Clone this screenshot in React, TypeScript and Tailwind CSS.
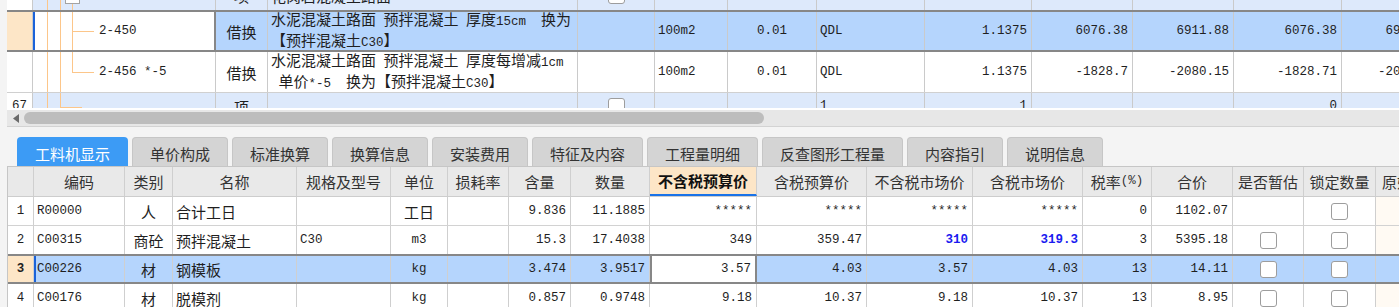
import React from 'react'

type Align = 'l' | 'c' | 'r'
type Seg = [number, number, number, number]

// 上段（定额行）列宽
const topW = ['w-[26px]', 'w-[183px]', 'w-[52px]', 'w-[310px]', 'w-[77px]', 'w-[73px]', 'w-[89px]', 'w-[108px]', 'w-[107px]', 'w-[101px]', 'w-[101px]', 'w-[108px]', 'w-[101px]']

// 下段（工料机）列宽
const botW = ['w-[26px]', 'w-[91px]', 'w-[48px]', 'w-[124px]', 'w-[94px]', 'w-[57px]', 'w-[61px]', 'w-[62px]', 'w-[79px]', 'w-[107px]', 'w-[110px]', 'w-[106px]', 'w-[110px]', 'w-[69px]', 'w-[81px]', 'w-[71px]', 'w-[72px]', 'w-[100px]']

const alignCls = (a: Align) => (a === 'r' ? 'justify-end pr-1' : a === 'c' ? 'justify-center' : 'pl-[3px]')

// ASCII は等幅、漢字は CJK フォントで
function Mix({ text }: { text: string }) {
  const parts = text.match(/[\x00-\x7f]+|[^\x00-\x7f]+/g) || []
  return (
    <>
      {parts.map((p, i) =>
        /^[\x00-\x7f]/.test(p) ? (
          <span key={i} className="font-['Liberation_Mono',monospace] text-[12.5px]">{p}</span>
        ) : (
          <span key={i}>{p}</span>
        )
      )}
    </>
  )
}

function Check() {
  return <span className="block w-[17px] h-[17px] rounded-[3px] border border-[#9d9d9d] bg-white" />
}

function Tree({ w, h, segs, boxY }: { w: number; h: number; segs: Seg[]; boxY?: number }) {
  return (
    <svg width={w} height={h} className="shrink-0" shapeRendering="crispEdges">
      {segs.map(([x1, y1, x2, y2], i) => (
        <line key={i} x1={x1} y1={y1} x2={x2} y2={y2} stroke="#fcc68a" strokeWidth={1} />
      ))}
      {boxY !== undefined && (
        <>
          <rect x={29.5} y={boxY + 0.5} width={14} height={14} fill="#fff" stroke="#a3a3a3" />
          <line x1={33} y1={boxY + 7.5} x2={40} y2={boxY + 7.5} stroke="#555" />
        </>
      )}
    </svg>
  )
}

function TCell({ i, align = 'l', className = '', children }: { i: number; align?: Align; className?: string; children?: React.ReactNode }) {
  return (
    <div className={`${topW[i]} shrink-0 h-full border-r border-[#cacaca] flex items-center overflow-hidden whitespace-pre ${alignCls(align)} ${className}`}>
      {children}
    </div>
  )
}

function BCell({ i, align = 'l', className = '', children }: { i: number; align?: Align; className?: string; children?: React.ReactNode }) {
  return (
    <div className={`${botW[i]} shrink-0 h-full border-r border-[#cfcfcf] flex items-center overflow-hidden whitespace-pre ${alignCls(align)} ${className}`}>
      {children}
    </div>
  )
}

function TopGrid() {
  return (
    <div className="h-[108px] overflow-hidden bg-white">
      {/* 66 行（上が切れている） */}
      <div className="flex w-max h-[31px] -mt-[20px] border-b border-[#d0d0d0] bg-[#dde9fb]">
        <TCell i={0} align="c" className="bg-white"><Mix text="66" /></TCell>
        <TCell i={1} className="pl-0">
          <Tree w={51} h={30} boxY={9} segs={[[11.5, 0, 11.5, 30], [24.5, 0, 24.5, 30], [36.5, 24, 36.5, 30]]} />
          <Mix text="040203006001" />
        </TCell>
        <TCell i={2} align="c">项</TCell>
        <TCell i={3}>花岗岩混凝土路面</TCell>
        <TCell i={4} align="c"><Check /></TCell>
        <TCell i={5}><Mix text="m2" /></TCell>
        <TCell i={6} />
        <TCell i={7}><Mix text="GCLMXHJ" /></TCell>
        <TCell i={8} align="r"><Mix text="5687.46" /></TCell>
        <TCell i={9} />
        <TCell i={10} />
        <TCell i={11} align="r"><Mix text="12.48" /></TCell>
        <TCell i={12} />
      </div>

      {/* 2-450 選択行 */}
      <div className="flex w-max h-[42px] -mt-px border-y-2 border-[#878787] bg-[#b5d5fd]">
        <TCell i={0} className="bg-[#fde6c7]" />
        <TCell i={1} className="pl-0 bg-white border-l-2 border-l-[#1b63d9] border-r-2 border-r-[#878787]">
          <Tree w={61} h={38} segs={[[9.5, 0, 9.5, 38], [22.5, 0, 22.5, 38], [34.5, 0, 34.5, 38], [34.5, 19.5, 56, 19.5]]} />
          <Mix text="2-450" />
        </TCell>
        <TCell i={2} align="c">借换</TCell>
        <TCell i={3} className="flex-col items-start justify-center">
          <div><Mix text="水泥混凝土路面 预拌混凝土 厚度15cm  换为" /></div>
          <div>【预拌混凝土<Mix text="C30" />】</div>
        </TCell>
        <TCell i={4} />
        <TCell i={5}><Mix text="100m2" /></TCell>
        <TCell i={6} align="c"><Mix text="0.01" /></TCell>
        <TCell i={7}><Mix text="QDL" /></TCell>
        <TCell i={8} align="r"><Mix text="1.1375" /></TCell>
        <TCell i={9} align="r"><Mix text="6076.38" /></TCell>
        <TCell i={10} align="r"><Mix text="6911.88" /></TCell>
        <TCell i={11} align="r"><Mix text="6076.38" /></TCell>
        <TCell i={12} align="r"><Mix text="6911.88" /></TCell>
      </div>

      {/* 2-456 */}
      <div className="flex w-max h-[41px] border-b border-[#d0d0d0] bg-white">
        <TCell i={0} />
        <TCell i={1} className="pl-0">
          <Tree w={63} h={40} segs={[[11.5, 0, 11.5, 40], [24.5, 0, 24.5, 40], [36.5, 0, 36.5, 20.5], [36.5, 20.5, 58, 20.5]]} />
          <Mix text="2-456 *-5" />
        </TCell>
        <TCell i={2} align="c">借换</TCell>
        <TCell i={3} className="flex-col items-start justify-center">
          <div><Mix text="水泥混凝土路面 预拌混凝土 厚度每增减1cm" /></div>
          <div><Mix text=" 单价*-5  换为【预拌混凝土C30】" /></div>
        </TCell>
        <TCell i={4} />
        <TCell i={5}><Mix text="100m2" /></TCell>
        <TCell i={6} align="c"><Mix text="0.01" /></TCell>
        <TCell i={7}><Mix text="QDL" /></TCell>
        <TCell i={8} align="r"><Mix text="1.1375" /></TCell>
        <TCell i={9} align="r"><Mix text="-1828.7" /></TCell>
        <TCell i={10} align="r"><Mix text="-2080.15" /></TCell>
        <TCell i={11} align="r"><Mix text="-1828.71" /></TCell>
        <TCell i={12} align="r"><Mix text="-2080.15" /></TCell>
      </div>

      {/* 67 行（下が切れている） */}
      <div className="flex w-max h-[28px] border-b border-[#d0d0d0] bg-[#dde9fb]">
        <TCell i={0} align="c" className="bg-white"><Mix text="67" /></TCell>
        <TCell i={1} className="pl-0">
          <Tree w={51} h={27} segs={[[11.5, 0, 11.5, 27], [24.5, 0, 24.5, 14.5], [24.5, 14.5, 46, 14.5]]} />
        </TCell>
        <TCell i={2} align="c">项</TCell>
        <TCell i={3} />
        <TCell i={4} align="c"><Check /></TCell>
        <TCell i={5} />
        <TCell i={6} />
        <TCell i={7}><Mix text="1" /></TCell>
        <TCell i={8} align="r"><Mix text="1" /></TCell>
        <TCell i={9} />
        <TCell i={10} />
        <TCell i={11} align="r"><Mix text="0" /></TCell>
        <TCell i={12} />
      </div>
    </div>
  )
}

function ScrollBar() {
  return (
    <>
      <div className="h-[2px] bg-white" />
      <div className="h-[17px] bg-[#e7e7e7] flex items-center border-b border-[#d3d3d3]">
        <svg width="6" height="9" className="ml-[6px] shrink-0">
          <path d="M6 0 L0 4.5 L6 9 Z" fill="#6a6a6a" />
        </svg>
        <div className="ml-[5px] w-[740px] h-[12px] rounded-[6px] bg-[#bdbdbd]" />
      </div>
      <div className="h-[10px]" />
    </>
  )
}

const tabs = [
  { label: '工料机显示', w: 'w-[111px]' },
  { label: '单价构成', w: 'w-[96px]' },
  { label: '标准换算', w: 'w-[96px]' },
  { label: '换算信息', w: 'w-[96px]' },
  { label: '安装费用', w: 'w-[96px]' },
  { label: '特征及内容', w: 'w-[111px]' },
  { label: '工程量明细', w: 'w-[111px]' },
  { label: '反查图形工程量', w: 'w-[141px]' },
  { label: '内容指引', w: 'w-[96px]' },
  { label: '说明信息', w: 'w-[96px]' },
]

function Tabs() {
  return (
    <div className="flex gap-1 ml-[10px] h-[29px]">
      {tabs.map((t, i) => (
        <div
          key={t.label}
          className={`${t.w} h-full shrink-0 rounded-t-[4px] flex items-center justify-center pt-[3px] ${
            i === 0 ? 'bg-[#3c9bf5] text-white' : 'bg-[#d4d4d4] text-[#333] border border-b-0 border-[#c6c6c6]'
          }`}
        >
          {t.label}
        </div>
      ))}
    </div>
  )
}

const headers = ['', '编码', '类别', '名称', '规格及型号', '单位', '损耗率', '含量', '数量', '不含税预算价', '含税预算价', '不含税市场价', '含税市场价', '税率(%)', '合价', '是否暂估', '锁定数量', '原始数量']

type Mat = {
  no: string
  code: string
  kind: string
  name: string
  spec: string
  unit: string
  amt: string
  qty: string
  p1: string
  p2: string
  p3: string
  p4: string
  tax: string
  total: string
  est: boolean
  blue?: boolean
}

const mats: Mat[] = [
  { no: '1', code: 'R00000', kind: '人', name: '合计工日', spec: '', unit: '工日', amt: '9.836', qty: '11.1885', p1: '*****', p2: '*****', p3: '*****', p4: '*****', tax: '0', total: '1102.07', est: false },
  { no: '2', code: 'C00315', kind: '商砼', name: '预拌混凝土', spec: 'C30', unit: 'm3', amt: '15.3', qty: '17.4038', p1: '349', p2: '359.47', p3: '310', p4: '319.3', tax: '3', total: '5395.18', est: true, blue: true },
  { no: '3', code: 'C00226', kind: '材', name: '钢模板', spec: '', unit: 'kg', amt: '3.474', qty: '3.9517', p1: '3.57', p2: '4.03', p3: '3.57', p4: '4.03', tax: '13', total: '14.11', est: true },
  { no: '4', code: 'C00176', kind: '材', name: '脱模剂', spec: '', unit: 'kg', amt: '0.857', qty: '0.9748', p1: '9.18', p2: '10.37', p3: '9.18', p4: '10.37', tax: '13', total: '8.95', est: true },
]

function BottomGrid() {
  return (
    <div className="w-max border-t border-l border-[#c6c6c6] bg-white">
      <div className="flex h-[30px] border-b border-[#cdcdcd] bg-[#e9e9e9] text-[#333]">
        {headers.map((h, i) => (
          <BCell
            key={i}
            i={i}
            align={i === 17 ? 'l' : 'c'}
            className={i === 9 ? 'bg-[#fde6c7] font-bold text-[#111] border-b-2 border-b-[#1a73e8]' : i === 17 ? 'pl-[6px]' : ''}
          >
            <Mix text={h} />
          </BCell>
        ))}
      </div>
      {mats.map((m) => {
        const sel = m.no === '3'
        const blue = m.blue ? 'text-[#1b1bf0] font-bold' : ''
        return (
          <div
            key={m.no}
            className={`flex ${sel ? 'h-[30px] -mt-px border-y-2 border-[#878787] bg-[#b5d5fd]' : 'h-[29px] border-b border-[#d2d2d2]'}`}
          >
            <BCell i={0} align="c" className={sel ? 'bg-[#fde6c7] font-bold' : ''}><Mix text={m.no} /></BCell>
            <BCell i={1} className={sel ? 'border-l-2 border-l-[#1b63d9] pl-px' : ''}><Mix text={m.code} /></BCell>
            <BCell i={2} align="c">{m.kind}</BCell>
            <BCell i={3}>{m.name}</BCell>
            <BCell i={4}><Mix text={m.spec} /></BCell>
            <BCell i={5} align="c"><Mix text={m.unit} /></BCell>
            <BCell i={6} align="r" />
            <BCell i={7} align="r"><Mix text={m.amt} /></BCell>
            <BCell i={8} align="r"><Mix text={m.qty} /></BCell>
            <BCell i={9} align="r" className={sel ? 'bg-white border-l-2 border-l-[#878787] border-r-2 border-r-[#878787]' : ''}><Mix text={m.p1} /></BCell>
            <BCell i={10} align="r"><Mix text={m.p2} /></BCell>
            <BCell i={11} align="r" className={blue}><Mix text={m.p3} /></BCell>
            <BCell i={12} align="r" className={blue}><Mix text={m.p4} /></BCell>
            <BCell i={13} align="r"><Mix text={m.tax} /></BCell>
            <BCell i={14} align="r"><Mix text={m.total} /></BCell>
            <BCell i={15} align="c">{m.est && <Check />}</BCell>
            <BCell i={16} align="c"><Check /></BCell>
            <BCell i={17} className={sel ? '' : 'bg-[#fffaf3]'} />
          </div>
        )
      })}
    </div>
  )
}

export default function App() {
  return (
    <div className="w-[1399px] h-[307px] overflow-hidden bg-[#f4f4f4] pl-[7px] font-['Noto_Sans_CJK_SC',sans-serif] text-[15px] leading-[17px] text-[#1f1f1f]">
      <TopGrid />
      <ScrollBar />
      <Tabs />
      <BottomGrid />
    </div>
  )
}
